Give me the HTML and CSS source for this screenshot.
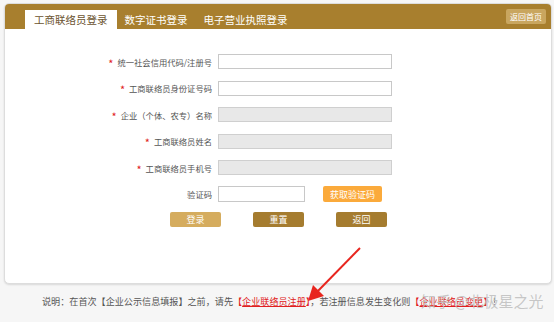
FILE: index.html
```html
<!DOCTYPE html>
<html lang="zh-CN">
<head>
    <meta charset="UTF-8">
    <title>工商联络员登录</title>
    <link rel="stylesheet" href="styles.css">
</head>
<body>
    <div class="panel">
        <div class="panel-head">
            <ul class="tabs">
                <li class="tab active">工商联络员登录</li>
                <li class="tab">数字证书登录</li>
                <li class="tab">电子营业执照登录</li>
            </ul>
            <a class="home-btn">返回首页</a>
        </div>
        <div class="form">
            <label class="label"><span class="star">*</span>统一社会信用代码/注册号</label>
            <input class="field" type="text">
            <label class="label"><span class="star">*</span>工商联络员身份证号码</label>
            <input class="field" type="text">
            <label class="label"><span class="star">*</span>企业（个体、农专）名称</label>
            <input class="field disabled" type="text" disabled>
            <label class="label"><span class="star">*</span>工商联络员姓名</label>
            <input class="field disabled" type="text" disabled>
            <label class="label"><span class="star">*</span>工商联络员手机号</label>
            <input class="field disabled" type="text" disabled>
            <label class="label">验证码</label>
            <div class="code-row">
                <input class="field code" type="text">
                <button class="code-btn">获取验证码</button>
            </div>
        </div>
        <div class="actions">
            <button class="btn btn-login">登录</button>
            <button class="btn">重置</button>
            <button class="btn">返回</button>
        </div>
    </div>
    <p class="note">说明：在首次【企业公示信息填报】之前，请先<a class="red">【<u>企业联络员注册</u>】</a>，若注册信息发生变化则<a class="red">【<u>企业联络员变更</u>】</a>！</p>

    <svg class="arrow" width="60" height="60" viewBox="0 0 60 60">
        <line x1="56" y1="3" x2="12" y2="48" stroke="#e8261f" stroke-width="2"/>
        <polygon points="4,56 9,40 20,51" fill="#e8261f"/>
    </svg>
    <div class="watermark">知乎 @北极星之光</div>
</body>
</html>
```

FILE: styles.css
```css
body {
    margin: 0;
    background: #f6f6f6;
    font-family: "Noto Sans CJK SC", "Liberation Sans", sans-serif;
    color: #555;
    position: relative;
    width: 554px;
    height: 322px;
    overflow: hidden;
}
.panel {
    margin: 3px 2px 0 4px;
    height: 281px;
    background: white;
    border: 1px solid #ddd;
    border-radius: 5px;
    box-sizing: border-box;
    box-shadow: 0 1px 2px rgba(0, 0, 0, 0.12);
    overflow: hidden;
}
.panel-head {
    height: 25px;
    background: #a87f2e;
    display: flex;
    justify-content: space-between;
    align-items: flex-end;
    padding: 0 5px 0 20px;
}
.tabs {
    list-style: none;
    margin: 0;
    padding: 0;
    display: flex;
    align-items: flex-end;
}
.tab {
    height: 19px;
    line-height: 19px;
    font-size: 10.5px;
    color: white;
    padding: 0 8px;
    white-space: nowrap;
}
.tab.active {
    background: white;
    color: #6b5330;
    padding: 0 9px 0 9px;
}
.home-btn {
    align-self: center;
    font-size: 8px;
    line-height: 15px;
    height: 15px;
    padding: 0 4px;
    background: #c9a65f;
    color: #fff;
    border-radius: 2px;
}
.form {
    display: grid;
    grid-template-columns: 207px 174px;
    column-gap: 6px;
    row-gap: 11.6px;
    padding-top: 25px;
    align-items: center;
}
.label {
    display: flex;
    justify-content: flex-end;
    align-items: center;
    height: 15px;
    font-size: 8.3px;
    color: #555;
    white-space: nowrap;
}
.star {
    color: #e02020;
    font-size: 11px;
    line-height: 1;
    margin-right: 4px;
    padding-top: 3px;
}
.field {
    height: 15px;
    box-sizing: border-box;
    margin: 0;
    padding: 0 3px;
    border: 1px solid #c8c8c8;
    background: white;
    width: 174px;
}
.field.disabled {
    background: #e8e8e8;
    border-color: #cfcfcf;
}
.code-row {
    display: flex;
    align-items: center;
    gap: 18px;
    height: 15px;
}
.field.code {
    width: 87px;
    height: 16px;
}
.code-btn {
    width: 59px;
    height: 16px;
    padding: 0;
    border: none;
    border-radius: 2px;
    background: #fbaa3b;
    color: white;
    font-family: inherit;
    font-size: 9px;
}
.actions {
    display: flex;
    gap: 32px;
    padding-left: 165px;
    margin-top: 10px;
}
.btn {
    width: 51px;
    height: 15px;
    padding: 0;
    border: none;
    border-radius: 2px;
    background: #a57c2f;
    color: white;
    font-family: inherit;
    font-size: 9px;
}
.btn-login {
    background: #d5ac5e;
}
.note {
    margin: 10px 0 0 42px;
    font-size: 9.1px;
    color: #555;
    white-space: nowrap;
}
.red {
    color: #e02020;
}
.arrow {
    position: absolute;
    left: 304px;
    top: 245px;
}
.watermark {
    position: absolute;
    left: 421px;
    top: 290px;
    font-size: 15px;
    color: rgba(190, 190, 190, 0.85);
    white-space: nowrap;
}
```
